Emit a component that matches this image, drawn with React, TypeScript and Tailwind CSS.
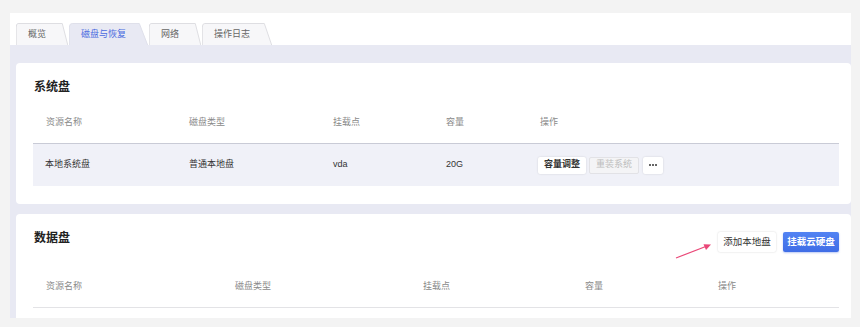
import React from "react";

const FONT = { fontFamily: '"Liberation Sans", "Noto Sans CJK SC", sans-serif' };

function Tab({ label, active }: { label: string; active?: boolean }) {
  return (
    <div className="relative h-[22px] flex items-center pl-[12px] pr-[22px]">
      <svg className="absolute inset-0 w-full h-full" preserveAspectRatio="none" viewBox="0 0 100 22">
        <path
          d="M0.5,22 L0.5,4 Q0.5,0.5 4,0.5 L89,0.5 L99.5,22"
          fill={active ? "#e8e9f3" : "#f7f7f9"}
          stroke={active ? "#dfe0ea" : "#dedee2"}
          strokeWidth="1"
          vectorEffect="non-scaling-stroke"
        />
      </svg>
      <span className={`relative text-[9px] leading-none ${active ? "text-[#4a6be0]" : "text-[#666]"}`}>{label}</span>
    </div>
  );
}

function BtnSmall({ children, disabled }: { children: React.ReactNode; disabled?: boolean }) {
  return (
    <div
      className={
        disabled
          ? "h-[17px] px-[6px] flex items-center text-[9px] text-[#bdbdbd] bg-[#f4f4f6] border border-[#e2e2e6] rounded-[2px]"
          : "h-[17px] px-[6px] flex items-center text-[9px] font-semibold text-[#333] bg-white rounded-[2px] shadow-[0_0_2px_rgba(0,0,0,0.15)]"
      }
    >
      {children}
    </div>
  );
}

export default function App() {
  const cols1 = ["w-[143px]", "w-[144px]", "w-[113px]", "w-[94px]", "flex-1"];
  const cols2 = ["w-[189px]", "w-[188px]", "w-[162px]", "w-[133px]", "flex-1"];
  const heads = ["资源名称", "磁盘类型", "挂载点", "容量", "操作"];
  return (
    <div className="w-[860px] h-[327px] bg-[#f3f3f3] pt-[13px] pl-[10px] pr-[9px]" style={FONT}>
      <div className="h-[305px] bg-white overflow-hidden flex flex-col">
        <div className="h-[32px] pt-[10px] pl-[6px] flex items-end gap-[1px]">
          <Tab label="概览" />
          <Tab label="磁盘与恢复" active />
          <Tab label="网络" />
          <Tab label="操作日志" />
        </div>
        <div className="flex-1 bg-[#e8e9f3] pl-[6px] pt-[18px] flex flex-col gap-[10px]">
          {/* 系统盘 */}
          <div className="h-[141px] shrink-0 bg-white rounded-[4px] pl-[17px] pr-[12px] pt-[16px]">
            <div className="pl-[1px] text-[12px] leading-[17px] font-bold text-[#222]">系统盘</div>
            <div className="mt-[6px] h-[42px] flex items-center border-b border-[#c9cbd6]">
              {heads.map((h, i) => (
                <div key={h} className={`${cols1[i]} pl-[13px] text-[9px] text-[#8a8a8a]`}>{h}</div>
              ))}
            </div>
            <div className="h-[42px] flex items-center bg-[#f0f1f8] text-[9px] text-[#333]">
              <div className={`${cols1[0]} pl-[12px]`}>本地系统盘</div>
              <div className={`${cols1[1]} pl-[13px]`}>普通本地盘</div>
              <div className={`${cols1[2]} pl-[13px]`}>vda</div>
              <div className={`${cols1[3]} pl-[13px]`}>20G</div>
              <div className="flex-1 pl-[11px] flex items-center gap-[3px]">
                <BtnSmall>容量调整</BtnSmall>
                <BtnSmall disabled>重装系统</BtnSmall>
                <div className="ml-[1px] h-[17px] w-[20px] flex items-center justify-center gap-[1px] bg-white rounded-[2px] shadow-[0_0_2px_rgba(0,0,0,0.15)]">
                  <span className="w-[2px] h-[2px] rounded-full bg-[#333]" />
                  <span className="w-[2px] h-[2px] rounded-full bg-[#333]" />
                  <span className="w-[2px] h-[2px] rounded-full bg-[#333]" />
                </div>
              </div>
            </div>
          </div>
          {/* 数据盘 */}
          <div className="flex-1 bg-white rounded-t-[4px] pl-[17px] pr-[12px] pt-[16px]">
            <div className="relative flex items-start justify-between">
              <div className="pl-[1px] text-[12px] leading-[17px] font-bold text-[#222]">数据盘</div>
              <div className="mt-[2px] flex items-center gap-[7px]">
                <div className="relative h-[20px] w-[58px] flex items-center justify-center text-[9.5px] text-[#333] bg-white rounded-[2px] shadow-[0_0_2px_rgba(0,0,0,0.18)]">
                  添加本地盘
                  <svg className="absolute left-[-44px] top-[8px] w-[40px] h-[20px]" viewBox="0 0 40 20">
                    <line x1="2" y1="18" x2="33" y2="6" stroke="#ea4878" strokeWidth="1.2" />
                    <path d="M37,4.5 L29.5,4.2 L32,10 Z" fill="#ea4878" />
                  </svg>
                </div>
                <div className="h-[20px] w-[56px] flex items-center justify-center text-[9.5px] font-semibold text-white bg-[linear-gradient(180deg,#5283f3,#3f6de6)] rounded-[2px] shadow-[0_1px_2px_rgba(60,100,220,0.35)]">
                  挂载云硬盘
                </div>
              </div>
            </div>
            <div className="mt-[14px] h-[42px] flex items-center border-b border-[#e3e3e6]">
              {heads.map((h, i) => (
                <div key={h} className={`${cols2[i]} pl-[13px] text-[9px] text-[#8a8a8a]`}>{h}</div>
              ))}
            </div>
          </div>
        </div>
      </div>
    </div>
  );
}
